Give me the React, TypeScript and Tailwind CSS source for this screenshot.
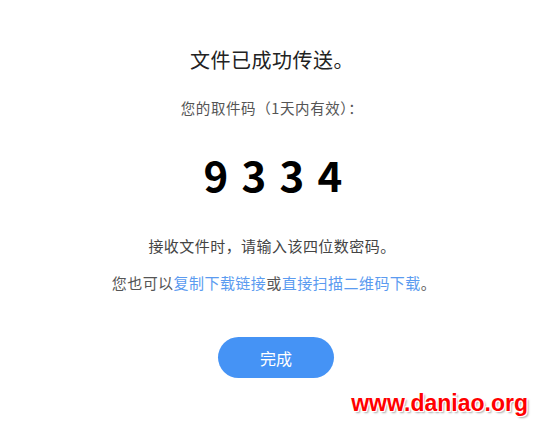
const CODE = ["9", "3", "3", "4"];

export default function App() {
  return (
    <div
      className="relative h-[424px] w-[544px] overflow-hidden bg-white"
      style={{ fontFamily: '"Microsoft YaHei", "Noto Sans CJK SC", "Noto Sans", sans-serif' }}
    >
      <div className="flex flex-col items-center pt-[45px]">
        <h1 className="text-[20px] leading-[30px] tracking-[0.5px] text-[#222]">文件已成功传送。</h1>
        <p className="mt-[23px] text-[14.5px] leading-[20px] tracking-[0.6px] text-[#555]">您的取件码（1天内有效）：</p>

        <div className="mt-[34px] flex gap-[15px] text-[42px] leading-[44px] font-bold text-black">
          {CODE.map((d, i) => (
            <span key={i} className="w-[23px] text-center">
              {d}
            </span>
          ))}
        </div>

        <p className="mt-[39px] text-[15px] leading-[22px] tracking-[0.45px] text-[#444]">接收文件时，请输入该四位数密码。</p>
        <p className="mt-[15px] ml-[4px] text-[15px] leading-[22px] tracking-[0.45px] text-[#555]">
          您也可以<a className="text-[#5b9bf0]">复制下载链接</a>或<a className="text-[#5b9bf0]">直接扫描二维码下载</a>。
        </p>

        <button className="mt-[43px] ml-[8px] h-[41px] w-[116px] rounded-full bg-[#4593f5] text-[16px] text-white">
          完成
        </button>
      </div>

      <div
        className="absolute right-[16px] bottom-[8px] text-[23px] leading-[26px] font-black text-[#ff0000]"
        style={{
          fontFamily: '"Liberation Sans", Arial, sans-serif',
          textShadow: "1px 1px 0 #fff, -1px -1px 0 #fff, 1px -1px 0 #fff, -1px 1px 0 #fff, 2px 2px 2px #aaa",
        }}
      >
        www.daniao.org
      </div>
    </div>
  );
}
